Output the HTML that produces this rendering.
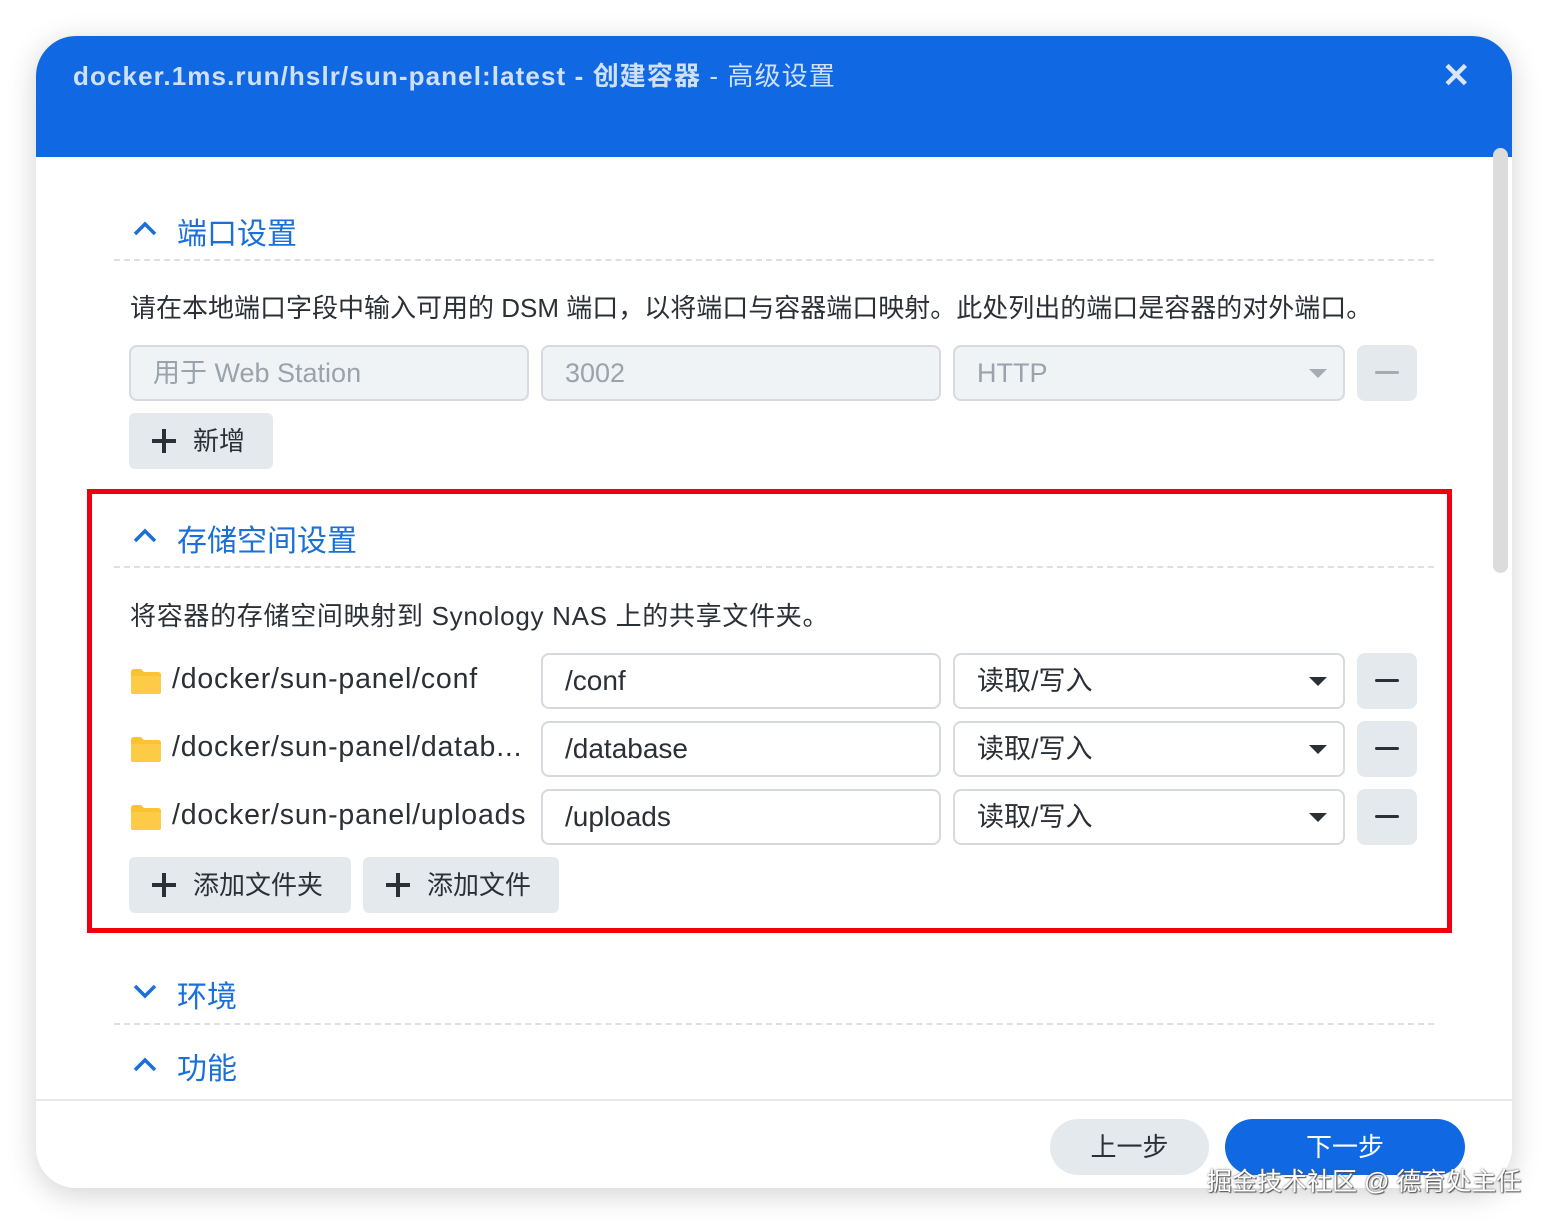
<!DOCTYPE html>
<html><head><meta charset="utf-8"><style>
*{box-sizing:border-box;margin:0;padding:0}
body{width:1548px;height:1224px;background:#fff;position:relative;overflow:hidden;font-family:"Liberation Sans","Noto Sans CJK SC",sans-serif;color:#2b3036}
.dlg{position:absolute;left:36px;top:36px;width:1476px;height:1152px;border-radius:40px;background:#fff;overflow:hidden;box-shadow:0 6px 30px rgba(0,0,0,.18)}
.hdr{position:absolute;left:0;top:0;width:100%;height:121px;background:#1069e2}
.title{position:absolute;left:37px;top:20px;font-size:26px;letter-spacing:1.1px;font-weight:bold;color:#cfe0fb;white-space:nowrap}
.x{position:absolute;left:1406px;top:20px;color:#d9e6fb;font-size:34px;font-weight:bold}
.abs{position:absolute}
.sec{position:absolute;left:96px;font-size:30px;color:#1a6fd8}
.dash{position:absolute;left:78px;width:1320px;border-top:2px dashed #dcdfe3}
.txt{position:absolute;font-size:24px;color:#2b3036;white-space:nowrap}
.inp{position:absolute;height:56px;border:2px solid #d6dade;border-radius:8px;font-size:28px;padding-left:22px;line-height:52px;color:#2b3036;background:#fff}
.dis{background:#f0f3f6;color:#9aa2ab;border-color:#d6dade;font-size:27px}
.arr{position:absolute;right:16px;top:22px;width:0;height:0;border-left:9px solid transparent;border-right:9px solid transparent;border-top:9px solid #2b3036}
.dis .arr{border-top-color:#a4abb2}
.mbtn{position:absolute;width:60px;height:56px;border-radius:8px;background:#e4e9ee}
.mbtn i{position:absolute;left:18px;top:26px;width:24px;height:3px;background:#2b3036;border-radius:2px}
.mbtn.d i{background:#a4abb2}
.btn{position:absolute;height:56px;border-radius:6px;background:#e4e9ee;font-size:26px;line-height:56px;color:#2b3036}
.plus{position:absolute;left:23px;top:16px;width:24px;height:24px}
.plus:before{content:"";position:absolute;left:0;top:10px;width:24px;height:4px;background:#2b3036}
.plus:after{content:"";position:absolute;left:10px;top:0;width:4px;height:24px;background:#2b3036}
.path{left:172px;font-size:28.5px;letter-spacing:0.8px}
</style></head><body>
<div class="dlg">
<div class="hdr"><div class="title">docker.1ms.run/hslr/sun-panel:latest - 创建容器 <span style="font-weight:normal">- 高级设置</span></div><div class="x">✕</div></div>
<div class="abs" style="left:1457px;top:112px;width:15px;height:425px;background:#dcdcdc;border-radius:8px"></div>
</div>
<svg class="abs" style="left:132px;top:218px" width="26" height="20"><path d="M3 16 L13 6 L23 16" stroke="#1a6fd8" stroke-width="3.5" fill="none"/></svg>
<div class="sec" style="left:177px;top:209px">端口设置</div>
<div class="dash" style="left:114px;top:259px"></div>
<div class="txt" style="left:130px;top:288px;font-size:26px">请在本地端口字段中输入可用的 DSM 端口，以将端口与容器端口映射。此处列出的端口是容器的对外端口。</div>
<div class="inp dis" style="left:129px;top:345px;width:400px">用于 Web Station</div>
<div class="inp dis" style="left:541px;top:345px;width:400px">3002</div>
<div class="inp dis" style="left:953px;top:345px;width:392px">HTTP<span class="arr"></span></div>
<div class="mbtn d" style="left:1357px;top:345px"><i></i></div>
<div class="btn" style="left:129px;top:413px;width:144px"><span class="plus"></span><span style="position:absolute;left:64px">新增</span></div>

<div class="abs" style="left:87px;top:489px;width:1365px;height:444px;border:5px solid #f0000e"></div>
<svg class="abs" style="left:132px;top:525px" width="26" height="20"><path d="M3 16 L13 6 L23 16" stroke="#1a6fd8" stroke-width="3.5" fill="none"/></svg>
<div class="sec" style="left:177px;top:516px">存储空间设置</div>
<div class="dash" style="left:114px;top:566px"></div>
<div class="txt" style="left:130px;top:596px;font-size:26px;letter-spacing:0.7px">将容器的存储空间映射到 Synology NAS 上的共享文件夹。</div>

<svg class="abs" style="left:131px;top:669px" width="30" height="25"><path d="M0 3 Q0 0 3 0 H10 L13 3 H27 Q30 3 30 6 V22 Q30 25 27 25 H3 Q0 25 0 22Z" fill="#fbc232"/><rect x="0" y="7" width="30" height="18" rx="2" fill="#fdcb45"/></svg>
<div class="txt path" style="top:663px">/docker/sun-panel/conf</div>
<div class="inp" style="left:541px;top:653px;width:400px">/conf</div>
<div class="inp" style="left:953px;top:653px;width:392px;font-size:27px">读取/写入<span class="arr"></span></div>
<div class="mbtn" style="left:1357px;top:653px"><i></i></div>

<svg class="abs" style="left:131px;top:737px" width="30" height="25"><path d="M0 3 Q0 0 3 0 H10 L13 3 H27 Q30 3 30 6 V22 Q30 25 27 25 H3 Q0 25 0 22Z" fill="#fbc232"/><rect x="0" y="7" width="30" height="18" rx="2" fill="#fdcb45"/></svg>
<div class="txt path" style="top:731px">/docker/sun-panel/datab...</div>
<div class="inp" style="left:541px;top:721px;width:400px">/database</div>
<div class="inp" style="left:953px;top:721px;width:392px;font-size:27px">读取/写入<span class="arr"></span></div>
<div class="mbtn" style="left:1357px;top:721px"><i></i></div>

<svg class="abs" style="left:131px;top:805px" width="30" height="25"><path d="M0 3 Q0 0 3 0 H10 L13 3 H27 Q30 3 30 6 V22 Q30 25 27 25 H3 Q0 25 0 22Z" fill="#fbc232"/><rect x="0" y="7" width="30" height="18" rx="2" fill="#fdcb45"/></svg>
<div class="txt path" style="top:799px">/docker/sun-panel/uploads</div>
<div class="inp" style="left:541px;top:789px;width:400px">/uploads</div>
<div class="inp" style="left:953px;top:789px;width:392px;font-size:27px">读取/写入<span class="arr"></span></div>
<div class="mbtn" style="left:1357px;top:789px"><i></i></div>

<div class="btn" style="left:129px;top:857px;width:222px"><span class="plus"></span><span style="position:absolute;left:64px">添加文件夹</span></div>
<div class="btn" style="left:363px;top:857px;width:196px"><span class="plus"></span><span style="position:absolute;left:64px">添加文件</span></div>

<svg class="abs" style="left:132px;top:982px" width="26" height="20"><path d="M3 4 L13 14 L23 4" stroke="#1a6fd8" stroke-width="3.5" fill="none"/></svg>
<div class="sec" style="left:177px;top:972px">环境</div>
<div class="dash" style="left:114px;top:1023px"></div>
<svg class="abs" style="left:132px;top:1054px" width="26" height="20"><path d="M3 16 L13 6 L23 16" stroke="#1a6fd8" stroke-width="3.5" fill="none"/></svg>
<div class="sec" style="left:177px;top:1044px">功能</div>

<div class="abs" style="left:36px;top:1099px;width:1476px;border-top:2px solid #e6e8ea"></div>
<div class="abs" style="left:1050px;top:1119px;width:159px;height:56px;border-radius:28px;background:#e4e9ee;font-size:26px;line-height:56px;text-align:center;color:#2b3036">上一步</div>
<div class="abs" style="left:1225px;top:1119px;width:240px;height:56px;border-radius:28px;background:#1069e2;font-size:26px;line-height:56px;text-align:center;color:#fff">下一步</div>
<div class="abs" style="left:1207px;top:1162px;font-size:25px;color:#fff;text-shadow:0 0 2px #555,1px 1px 1px #555;white-space:nowrap">掘金技术社区 @ 德育处主任</div>
</body></html>
